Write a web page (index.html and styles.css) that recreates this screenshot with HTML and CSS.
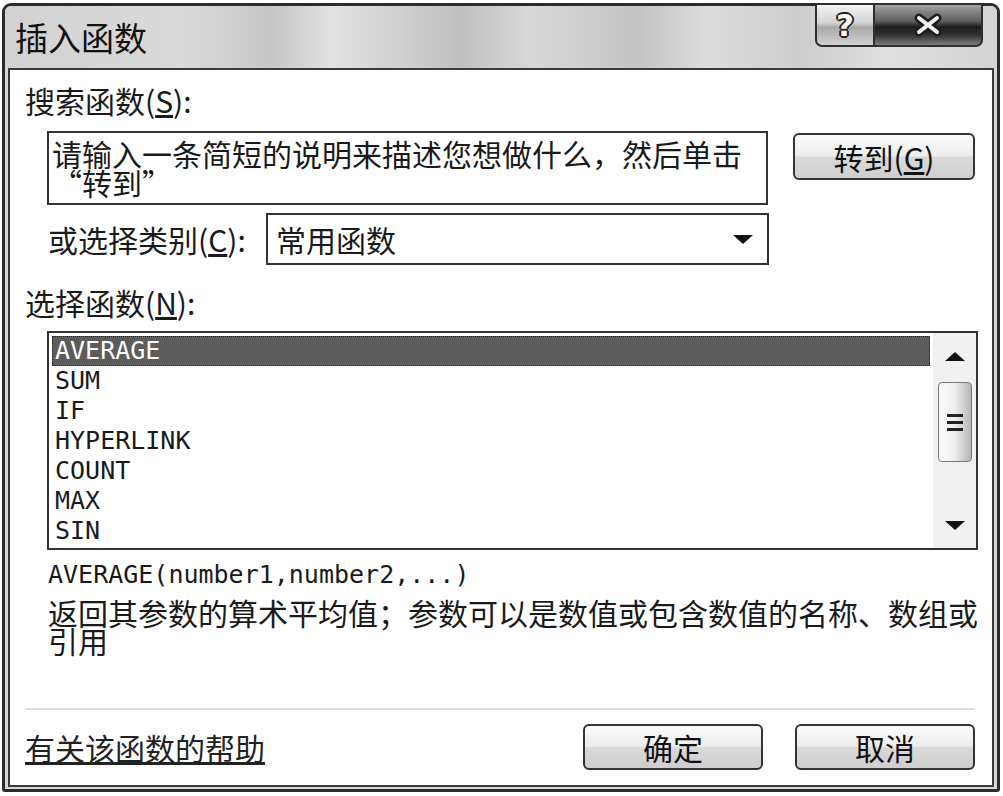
FILE: index.html
```html
<!DOCTYPE html>
<html lang="zh-CN">
<head>
    <meta charset="UTF-8">
    <meta name="viewport" content="width=device-width, initial-scale=1.0">
    <title>插入函数</title>
    <link rel="stylesheet" href="styles.css">
</head>
<body>

<!-- Janela do diálogo -->
<div class="dialog">
    <div class="titleBar">
        <span class="titleText">插入函数</span>
        <div class="captionButtons">
            <span class="helpButton">?</span>
            <span class="closeButton">
                <svg width="30" height="24" viewBox="0 0 30 24">
                    <path d="M6 5 L24 19 M24 5 L6 19" stroke="#1c1c1c" stroke-width="9" stroke-linecap="round"/>
                    <path d="M6 5 L24 19 M24 5 L6 19" stroke="#f4f4f4" stroke-width="4" stroke-linecap="round"/>
                </svg>
            </span>
        </div>
    </div>

    <div class="clientArea">
        <div class="sectionLabel">搜索函数(<u>S</u>):</div>

        <div class="searchRow">
            <div class="searchBox">请输入一条简短的说明来描述您想做什么，然后单击
“转到”</div>
            <button type="button" class="dialogButton goButton">转到(<u>G</u>)</button>
        </div>

        <div class="categoryRow">
            <span class="categoryLabel">或选择类别(<u>C</u>):</span>
            <div class="selectBox">
                <span>常用函数</span>
                <span class="arrowDown"></span>
            </div>
        </div>

        <div class="sectionLabel listLabel">选择函数(<u>N</u>):</div>

        <div class="listBox">
            <ul class="functionList">
                <li class="selected">AVERAGE</li>
                <li>SUM</li>
                <li>IF</li>
                <li>HYPERLINK</li>
                <li>COUNT</li>
                <li>MAX</li>
                <li>SIN</li>
            </ul>
            <div class="scrollBar">
                <div class="scrollArrow"><span class="arrowUp"></span></div>
                <div class="scrollThumb">
                    <span class="grip"></span>
                    <span class="grip"></span>
                    <span class="grip"></span>
                </div>
                <div class="scrollTrack"></div>
                <div class="scrollArrow"><span class="arrowDown"></span></div>
            </div>
        </div>

        <div class="signature">AVERAGE(number1,number2,...)</div>
        <div class="description">返回其参数的算术平均值；参数可以是数值或包含数值的名称、数组或引用</div>

        <div class="separator"></div>

        <div class="footer">
            <a href="javascript:void(0);" class="helpLink">有关该函数的帮助</a>
            <div class="footerButtons">
                <button type="button" class="dialogButton">确定</button>
                <button type="button" class="dialogButton">取消</button>
            </div>
        </div>
    </div>
</div>

</body>
</html>
```

FILE: styles.css
```css
body {
    margin: 0;
    padding: 0;
    background-color: #fff;
    font-family: "Noto Sans CJK SC", sans-serif;
    color: #1a1a1a;
}

.dialog {
    width: 998px;
    height: 789px;
    margin: 3px 0 0 2px;
    box-sizing: border-box;
    border: 3px solid #2b2b2b;
    border-radius: 9px 9px 3px 3px;
    background-color: #d6d6d6; /* moldura cinza */
    display: flex;
    flex-direction: column;
}

.titleBar {
    height: 62px;
    display: flex;
    justify-content: space-between;
    align-items: flex-start;
    border-radius: 6px 6px 0 0;
    background: linear-gradient(90deg, #d2d2d2 0%, #dadada 18%, #c6c6c6 27%, #e2e2e2 33%, #c0c0c0 46%, #d8d8d8 53%, #c4c4c4 64%, #dddddd 71%, #cdcdcd 80%, #e0e0e0 89%, #d4d4d4 100%);
}

.titleText {
    font-size: 33px;
    line-height: 62px;
    padding-left: 10px;
    color: #111;
}

.captionButtons {
    display: flex;
    margin: -3px 14px 0 0;
}

.helpButton,
.closeButton {
    height: 44px;
    box-sizing: border-box;
    border: 2px solid #2e2e2e;
    display: flex;
    align-items: center;
    justify-content: center;
}

.helpButton {
    width: 60px;
    border-radius: 0 0 0 7px;
    background: linear-gradient(#f2f2f2, #d4d4d4 45%, #a9a9a9 55%, #d0d0d0);
    font-family: "DejaVu Sans", sans-serif;
    font-weight: bold;
    font-size: 31px;
    line-height: 40px;
    color: #f6f6f6;
    text-shadow: 2px 0 #222, -2px 0 #222, 0 2px #222, 0 -2px #222, 1px 1px #222, -1px -1px #222, 1px -1px #222, -1px 1px #222;
}

.closeButton {
    width: 108px;
    border-left: none;
    border-radius: 0 0 7px 0;
    background: linear-gradient(#a2a2a2, #5e5e5e 40%, #1c1c1c 55%, #333 75%, #7c7c7c);
}

.clientArea {
    flex: 1;
    margin: 0 3px 2px 3px;
    background-color: #fff;
    border: 2px solid #3a3a3a;
    display: flex;
    flex-direction: column;
    padding-bottom: 15px;
}

.sectionLabel {
    font-size: 30px;
    line-height: 30px;
    margin: 15px 0 0 15px;
}

.listLabel {
    margin-top: 22px;
}

.searchRow {
    display: flex;
    align-items: flex-start;
    margin: 16px 0 0 37px;
}

.searchBox {
    width: 721px;
    height: 74px;
    box-sizing: border-box;
    border: 2px solid #333;
    padding: 6px 3px 0 3px;
    font-size: 30px;
    line-height: 29px;
    white-space: pre-line; /* quebra de linha do texto */
}

.dialogButton {
    height: 46px;
    width: 180px;
    box-sizing: border-box;
    border: 2px solid #333;
    border-radius: 6px;
    background: linear-gradient(#fbfbfb, #ececec 48%, #d9d9d9 52%, #cfcfcf);
    font-family: "Noto Sans CJK SC", sans-serif;
    font-size: 30px;
    line-height: 40px;
    color: #111;
    padding: 0;
    cursor: pointer;
}

.goButton {
    width: 182px;
    height: 47px;
    margin: 2px 0 0 25px;
}

.categoryRow {
    display: flex;
    align-items: center;
    margin: 8px 0 0 37px;
}

.categoryLabel {
    width: 218px;
    font-size: 30px;
    line-height: 30px;
    padding-left: 1px;
}

.selectBox {
    width: 503px;
    height: 52px;
    box-sizing: border-box;
    border: 2px solid #333;
    padding: 0 14px 0 8px;
    display: flex;
    justify-content: space-between;
    align-items: center;
    font-size: 30px;
}

.arrowDown,
.arrowUp {
    width: 0;
    height: 0;
    border-left: 10px solid transparent;
    border-right: 10px solid transparent;
}

.arrowDown {
    border-top: 9px solid #111;
}

.arrowUp {
    border-bottom: 9px solid #111;
}

.listBox {
    display: flex;
    width: 931px;
    height: 219px;
    box-sizing: border-box;
    border: 2px solid #333;
    margin: 14px 0 0 37px;
}

.functionList {
    flex: 1;
    list-style-type: none;
    margin: 0;
    padding: 3px;
    font-family: "DejaVu Sans Mono", monospace;
    font-size: 25px;
}

.functionList li {
    height: 30px;
    line-height: 30px;
    padding-left: 3px;
}

.functionList li.selected {
    background-color: #5c5c5c;
    color: #fff;
    outline: 1px dotted #222;
    outline-offset: -1px;
}

.scrollBar {
    width: 43px;
    background-color: #f1f1f1;
    display: flex;
    flex-direction: column;
    align-items: center;
}

.scrollArrow {
    height: 46px;
    width: 100%;
    display: flex;
    align-items: center;
    justify-content: center;
}

.scrollThumb {
    width: 34px;
    height: 80px;
    margin-top: 3px;
    box-sizing: border-box;
    border: 1px solid #777;
    border-radius: 4px;
    background: linear-gradient(90deg, #fbfbfb, #eeeeee 50%, #b5b5b5);
    display: flex;
    flex-direction: column;
    align-items: center;
    justify-content: center;
    gap: 4px;
}

.grip {
    width: 16px;
    height: 3px;
    background-color: #222;
}

.scrollTrack {
    flex: 1;
}

.signature {
    margin: 10px 0 0 38px;
    font-family: "DejaVu Sans Mono", monospace;
    font-size: 25px;
    line-height: 30px;
}

.description {
    width: 940px;
    margin: 8px 0 0 38px;
    font-size: 30px;
    line-height: 28px;
}

.separator {
    height: 2px;
    margin: auto 17px 0 15px;
    background-color: #dcdcdc;
}

.footer {
    display: flex;
    align-items: center;
    margin-top: 14px;
    padding: 0 17px 0 15px;
}

.helpLink {
    font-size: 30px;
    color: #222;
    text-decoration: underline;
}

.footerButtons {
    margin-left: auto;
    display: flex;
    gap: 32px;
}
```
